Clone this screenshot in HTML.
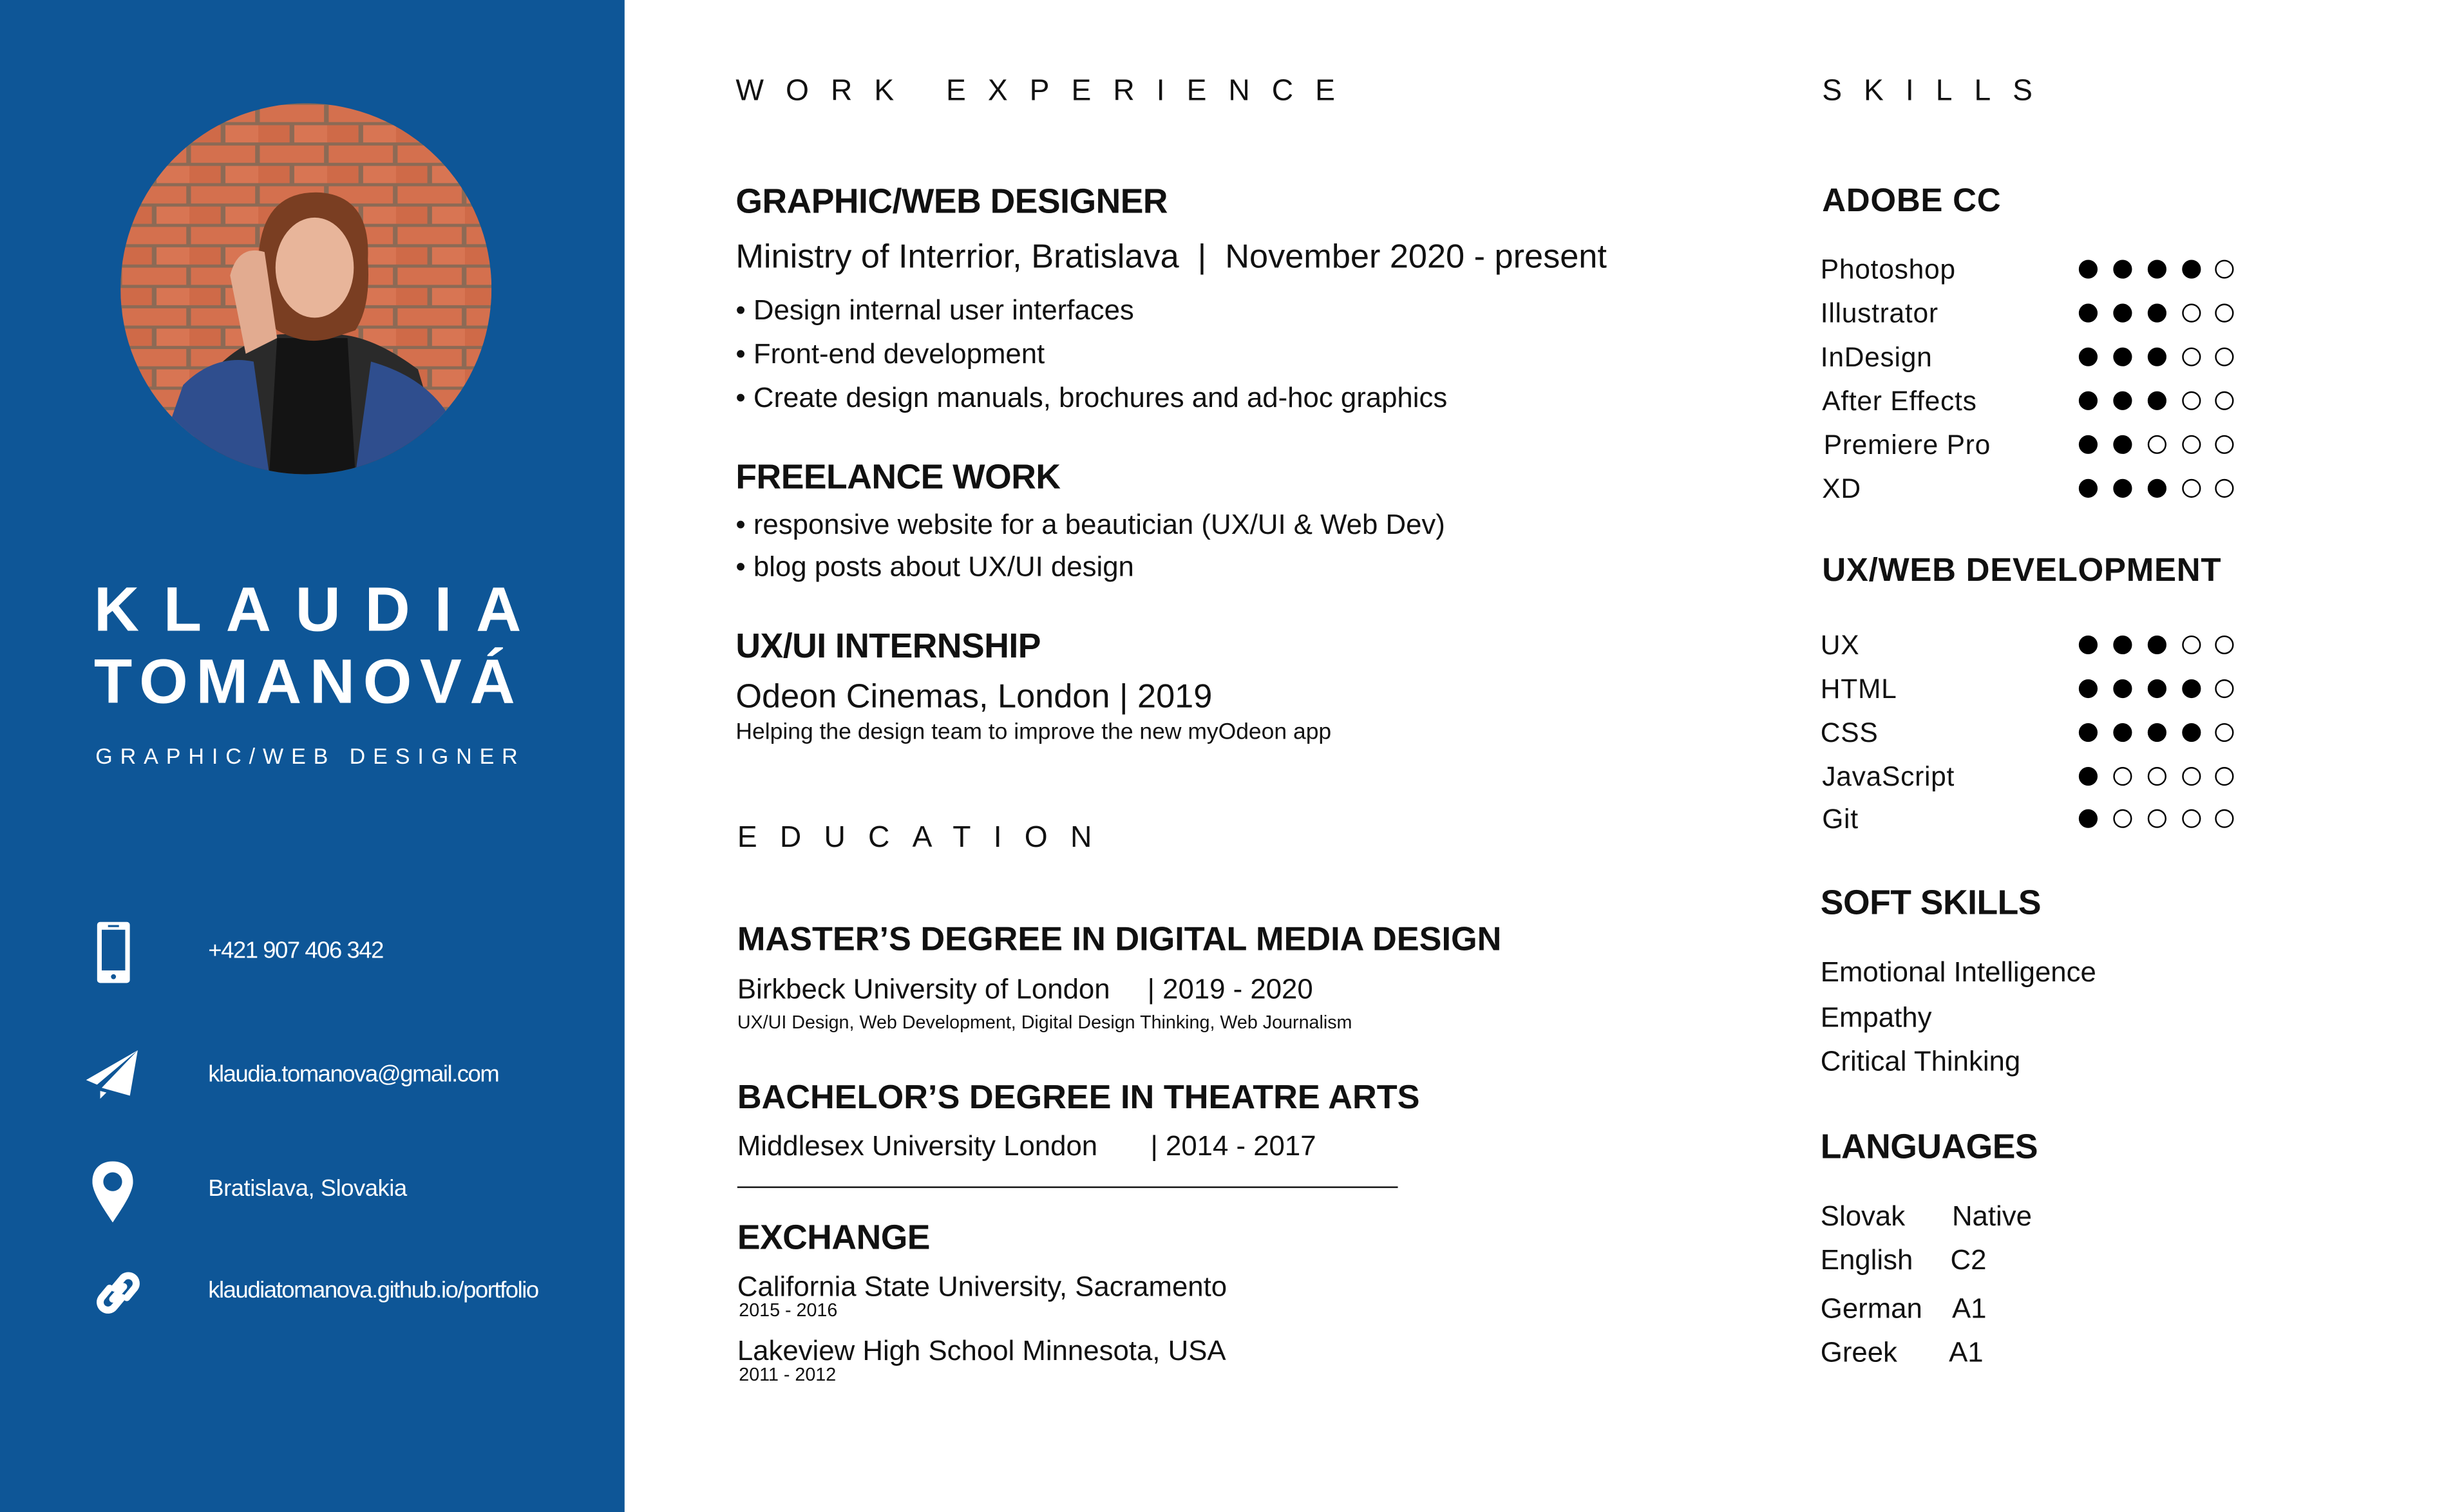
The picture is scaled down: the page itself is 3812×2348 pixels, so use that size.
<!DOCTYPE html>
<html><head><meta charset="utf-8">
<style>
html,body{margin:0;padding:0;background:#fff;overflow:hidden;}
body{width:3812px;height:2348px;position:relative;}
#p{position:absolute;left:0;top:0;width:1569px;height:966px;transform-origin:0 0;transform:scale(2.4306,2.43064);font-family:"Liberation Sans",sans-serif;color:#111;}
.t{position:absolute;white-space:nowrap;line-height:1;}
.side{position:absolute;left:0;top:0;width:399px;height:966px;background:#0e5697;}
.w{color:#fff;}
.h{font-size:19px;letter-spacing:14px;}
.b{font-weight:bold;font-size:22px;letter-spacing:-0.2px;}
.m{font-size:21.5px;letter-spacing:0;}
.s{font-size:18px;letter-spacing:0;}
.x{font-size:11.8px;letter-spacing:0;}
.k{font-size:17.5px;letter-spacing:0.3px;}
.d{position:absolute;width:12px;height:12px;border-radius:50%;box-sizing:border-box;border:1.3px solid #000;}
.f{background:#000;}
.c{font-size:15px;letter-spacing:-0.6px;color:#fff;}
</style></head><body><div id="p">
<div class="side"></div>
<svg style="position:absolute;left:77px;top:66px" width="237" height="237" viewBox="0 0 237 237">
<defs><clipPath id="cc"><circle cx="118.5" cy="118.5" r="118.5"/></clipPath>
<pattern id="br" width="44" height="26" patternUnits="userSpaceOnUse">
<rect width="44" height="26" fill="#8c6a55"/>
<rect x="1" y="1" width="41" height="11" fill="#d4704e"/>
<rect x="-21" y="14" width="41" height="11" fill="#cf6a48"/>
<rect x="23" y="14" width="41" height="11" fill="#d87553"/>
</pattern></defs>
<g clip-path="url(#cc)">
<rect width="237" height="237" fill="url(#br)"/>
<path d="M60 170 Q90 140 120 150 Q150 140 190 170 L210 237 L40 237 Z" fill="#2a2a2a"/>
<path d="M20 237 L40 180 Q60 160 85 165 L95 237 Z" fill="#2f4e8e"/>
<path d="M150 237 L160 165 Q195 175 210 200 L215 237 Z" fill="#2f4e8e"/>
<path d="M95 237 L100 150 L145 150 L150 237 Z" fill="#141414"/>
<path d="M88 100 Q90 55 128 57 Q160 60 158 100 Q160 130 150 145 L135 150 Q118 155 100 145 Q85 130 88 100Z" fill="#7a3e22"/>
<ellipse cx="124" cy="105" rx="25" ry="32" fill="#e8b59a"/>
<path d="M70 110 Q75 90 92 95 L100 150 L80 160 Z" fill="#e2ab90"/>
</g></svg>
<div class="t w" style="left:60px;top:370px;font-size:40px;font-weight:bold;letter-spacing:15.5px">KLAUDIA</div>
<div class="t w" style="left:60px;top:416px;font-size:40px;font-weight:bold;letter-spacing:5.2px">TOMANOVÁ</div>
<div class="t w" style="left:61px;top:476px;font-size:14px;letter-spacing:4.9px">GRAPHIC/WEB DESIGNER</div>
<svg style="position:absolute;left:62px;top:589px" width="21" height="39" viewBox="0 0 21 39"><rect x="0" y="0" width="21" height="39" rx="2" fill="#fff"/><rect x="3" y="5" width="15" height="26" fill="#0e5697"/><rect x="7" y="2" width="7" height="1.3" fill="#0e5697"/><circle cx="10.5" cy="35" r="1.6" fill="#0e5697"/></svg>
<svg style="position:absolute;left:55px;top:671px" width="34" height="32" viewBox="0 0 34 32"><path d="M33 0 L0 19 L7 22 Z M33 0 L10 24 L28 29 Z M9 26 L9 31 L13 27 Z" fill="#fff"/></svg>
<svg style="position:absolute;left:59px;top:742px" width="26" height="39" viewBox="0 0 26 39"><path d="M13 0 C5 0 0 5 0 13 C0 20 7 30 13 39 C19 30 26 20 26 13 C26 5 21 0 13 0Z M13 7 A6 6 0 1 1 12.99 7Z" fill="#fff" fill-rule="evenodd"/></svg>
<svg style="position:absolute;left:61px;top:811px" width="29" height="30" viewBox="0 0 29 30"><g fill="none" stroke="#fff" stroke-width="4.5" stroke-linecap="round"><path d="M12 12 L17 6 A5 5 0 0 1 25 12 L20 18"/><path d="M17 18 L12 24 A5 5 0 0 1 4 18 L9 12"/><path d="M11 19 L18 11"/></g></svg>
<div class="t c" style="left:133px;top:600px">+421 907 406 342</div>
<div class="t c" style="left:133px;top:679px">klaudia.tomanova@gmail.com</div>
<div class="t c" style="left:133px;top:752px;letter-spacing:-0.2px">Bratislava, Slovakia</div>
<div class="t c" style="left:133px;top:817px">klaudiatomanova.github.io/portfolio</div>

<div class="t h" style="left:470px;top:49px">WORK EXPERIENCE</div>
<div class="t b" style="left:470px;top:118px">GRAPHIC/WEB DESIGNER</div>
<div class="t m" style="left:470px;top:154px">Ministry of Interrior, Bratislava &nbsp;|&nbsp; November 2020 - present</div>
<div class="t s" style="left:470px;top:189px">• Design internal user interfaces</div>
<div class="t s" style="left:470px;top:217px">• Front-end development</div>
<div class="t s" style="left:470px;top:245px">• Create design manuals, brochures and ad-hoc graphics</div>
<div class="t b" style="left:470px;top:294px">FREELANCE WORK</div>
<div class="t s" style="left:470px;top:326px">• responsive website for a beautician (UX/UI &amp; Web Dev)</div>
<div class="t s" style="left:470px;top:353px">• blog posts about UX/UI design</div>
<div class="t b" style="left:470px;top:402px">UX/UI INTERNSHIP</div>
<div class="t m" style="left:470px;top:435px">Odeon Cinemas, London | 2019</div>
<div class="t" style="left:470px;top:461px;font-size:14.6px">Helping the design team to improve the new myOdeon app</div>

<div class="t h" style="left:471px;top:526px;letter-spacing:14.5px">EDUCATION</div>
<div class="t b" style="left:471px;top:590px;font-size:21.5px;letter-spacing:0">MASTER’S DEGREE IN DIGITAL MEDIA DESIGN</div>
<div class="t s" style="left:471px;top:623px">Birkbeck University of London</div>
<div class="t s" style="left:733px;top:623px">| 2019 - 2020</div>
<div class="t x" style="left:471px;top:648px">UX/UI Design, Web Development, Digital Design Thinking, Web Journalism</div>
<div class="t b" style="left:471px;top:691px;font-size:21.5px;letter-spacing:0">BACHELOR’S DEGREE IN THEATRE ARTS</div>
<div class="t s" style="left:471px;top:723px">Middlesex University London</div>
<div class="t s" style="left:735px;top:723px">| 2014 - 2017</div>
<div style="position:absolute;left:471px;top:758px;width:422px;height:1.4px;background:#111"></div>
<div class="t b" style="left:471px;top:780px">EXCHANGE</div>
<div class="t s" style="left:471px;top:813px">California State University, Sacramento</div>
<div class="t x" style="left:472px;top:832px">2015 - 2016</div>
<div class="t s" style="left:471px;top:854px">Lakeview High School Minnesota, USA</div>
<div class="t x" style="left:472px;top:873px">2011 - 2012</div>

<div class="t h" style="left:1164px;top:49px;letter-spacing:14px">SKILLS</div>
<div class="t b" style="left:1164px;top:118px;font-size:21px;letter-spacing:0.3px">ADOBE CC</div>
<div class="t k" style="left:1163px;top:164px">Photoshop</div>
<div class="t k" style="left:1163px;top:192px">Illustrator</div>
<div class="t k" style="left:1163px;top:220px">InDesign</div>
<div class="t k" style="left:1164px;top:248px">After Effects</div>
<div class="t k" style="left:1165px;top:276px">Premiere Pro</div>
<div class="t k" style="left:1164px;top:304px">XD</div>
<div class="t b" style="left:1164px;top:354px;font-size:21px;letter-spacing:0.3px">UX/WEB DEVELOPMENT</div>
<div class="t k" style="left:1163px;top:404px">UX</div>
<div class="t k" style="left:1163px;top:432px">HTML</div>
<div class="t k" style="left:1163px;top:460px">CSS</div>
<div class="t k" style="left:1164px;top:488px">JavaScript</div>
<div class="t k" style="left:1164px;top:515px">Git</div>
<div class="t b" style="left:1163px;top:566px">SOFT SKILLS</div>
<div class="t s" style="left:1163px;top:612px">Emotional Intelligence</div>
<div class="t s" style="left:1163px;top:641px">Empathy</div>
<div class="t s" style="left:1163px;top:669px">Critical Thinking</div>
<div class="t b" style="left:1163px;top:722px">LANGUAGES</div>
<div class="t s" style="left:1163px;top:768px">Slovak</div><div class="t s" style="left:1247px;top:768px">Native</div>
<div class="t s" style="left:1163px;top:796px">English</div><div class="t s" style="left:1246px;top:796px">C2</div>
<div class="t s" style="left:1163px;top:827px">German</div><div class="t s" style="left:1247px;top:827px">A1</div>
<div class="t s" style="left:1163px;top:855px">Greek</div><div class="t s" style="left:1245px;top:855px">A1</div>

<div style="position:absolute;left:0;top:0">
<div class="d f" style="left:1328px;top:166px"></div><div class="d f" style="left:1350px;top:166px"></div><div class="d f" style="left:1372px;top:166px"></div><div class="d f" style="left:1394px;top:166px"></div><div class="d" style="left:1415px;top:166px"></div>
<div class="d f" style="left:1328px;top:194px"></div><div class="d f" style="left:1350px;top:194px"></div><div class="d f" style="left:1372px;top:194px"></div><div class="d" style="left:1394px;top:194px"></div><div class="d" style="left:1415px;top:194px"></div>
<div class="d f" style="left:1328px;top:222px"></div><div class="d f" style="left:1350px;top:222px"></div><div class="d f" style="left:1372px;top:222px"></div><div class="d" style="left:1394px;top:222px"></div><div class="d" style="left:1415px;top:222px"></div>
<div class="d f" style="left:1328px;top:250px"></div><div class="d f" style="left:1350px;top:250px"></div><div class="d f" style="left:1372px;top:250px"></div><div class="d" style="left:1394px;top:250px"></div><div class="d" style="left:1415px;top:250px"></div>
<div class="d f" style="left:1328px;top:278px"></div><div class="d f" style="left:1350px;top:278px"></div><div class="d" style="left:1372px;top:278px"></div><div class="d" style="left:1394px;top:278px"></div><div class="d" style="left:1415px;top:278px"></div>
<div class="d f" style="left:1328px;top:306px"></div><div class="d f" style="left:1350px;top:306px"></div><div class="d f" style="left:1372px;top:306px"></div><div class="d" style="left:1394px;top:306px"></div><div class="d" style="left:1415px;top:306px"></div>
<div class="d f" style="left:1328px;top:406px"></div><div class="d f" style="left:1350px;top:406px"></div><div class="d f" style="left:1372px;top:406px"></div><div class="d" style="left:1394px;top:406px"></div><div class="d" style="left:1415px;top:406px"></div>
<div class="d f" style="left:1328px;top:434px"></div><div class="d f" style="left:1350px;top:434px"></div><div class="d f" style="left:1372px;top:434px"></div><div class="d f" style="left:1394px;top:434px"></div><div class="d" style="left:1415px;top:434px"></div>
<div class="d f" style="left:1328px;top:462px"></div><div class="d f" style="left:1350px;top:462px"></div><div class="d f" style="left:1372px;top:462px"></div><div class="d f" style="left:1394px;top:462px"></div><div class="d" style="left:1415px;top:462px"></div>
<div class="d f" style="left:1328px;top:490px"></div><div class="d" style="left:1350px;top:490px"></div><div class="d" style="left:1372px;top:490px"></div><div class="d" style="left:1394px;top:490px"></div><div class="d" style="left:1415px;top:490px"></div>
<div class="d f" style="left:1328px;top:517px"></div><div class="d" style="left:1350px;top:517px"></div><div class="d" style="left:1372px;top:517px"></div><div class="d" style="left:1394px;top:517px"></div><div class="d" style="left:1415px;top:517px"></div>
</div>
</div></body></html>
